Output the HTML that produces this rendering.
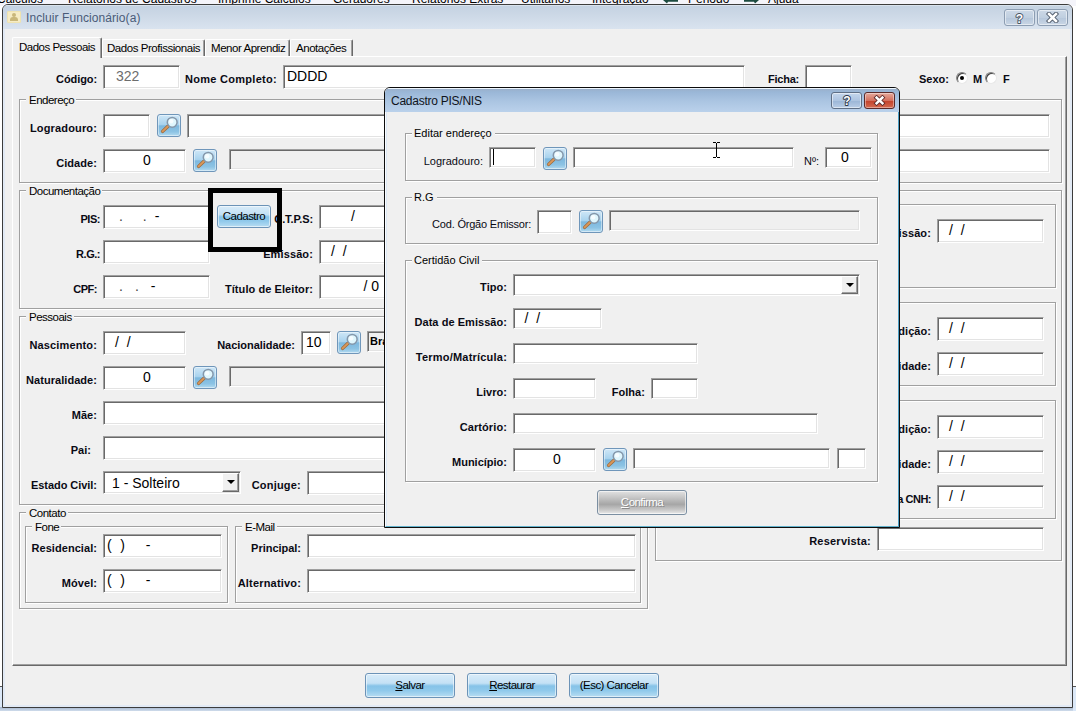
<!DOCTYPE html>
<html><head><meta charset="utf-8"><title>Incluir Funcionário(a)</title>
<style>
html,body{margin:0;padding:0;}
body{width:1076px;height:711px;overflow:hidden;background:#fff;position:relative;font-family:"Liberation Sans",sans-serif;font-size:11px;color:#000;}
div{box-sizing:border-box;}
.abs,.inp,.lbl,.grp,.gt,.sbtn,.btn{position:absolute;}
.inp{background:#fff;border:1px solid;border-color:#a0a0a0 #fff #fff #a0a0a0;box-shadow:inset 1px 1px 0 #696969, inset -1px -1px 0 #e3e3e3;font-size:14px;white-space:pre;overflow:hidden;color:#000;}
.inp span{position:absolute;top:2px;left:4px;line-height:17px;}
.inp.c span{left:5px;right:0;text-align:center;}
.inp.dis{background:#f0f0f0;}
.lbl{text-align:right;white-space:nowrap;line-height:16px;height:16px;font-size:11px;color:#0a0a14;}
.lbl.b{font-weight:bold;}
.lbl.r{font-weight:normal;}
.grp{border:1px solid #a0a0a0;box-shadow:1px 1px 0 #fff, inset 1px 1px 0 #fff;}
.gt{padding:0 2px 0 3px;line-height:14px;height:14px;font-size:11.5px;white-space:nowrap;color:#000;letter-spacing:-0.5px;}
.gt.ar{font-size:11px;letter-spacing:0;padding:0 3px 0 2px;margin-top:-1px;}
.sbtn{width:24px;height:23px;border:1px solid #6f96ba;border-radius:3px;background:linear-gradient(#cfe7f7 0%,#a9d3ee 45%,#7db8de 52%,#8cc3e4 80%,#b4dbf0 100%);box-shadow:inset 0 0 0 1px rgba(255,255,255,.45);}
.sbtn svg{position:absolute;left:-1px;top:-1px;}
.btn{border:1px solid #6c93b7;border-radius:3px;text-align:center;font-size:11.5px;letter-spacing:-0.55px;color:#000;background:linear-gradient(#d9ecf9 0%,#c4e1f5 40%,#86c3e8 52%,#90c9eb 72%,#b8ddf2 100%);box-shadow:inset 0 0 0 1px rgba(255,255,255,.55);}
.btn.gray{border-color:#7b8fa2;color:#fff;text-shadow:1px 1px 0 #8a8a8a;background:linear-gradient(#e2e2e2 0%,#c4c4c4 30%,#a6a6a6 58%,#c8c8c8 82%,#ececec 100%);}
u{text-decoration:underline;}
.combo-btn{position:absolute;right:1px;top:1px;bottom:1px;width:17px;background:#f0f0f0;border:1px solid;border-color:#fff #696969 #696969 #fff;box-shadow:inset -1px -1px 0 #a0a0a0;}
.combo-btn:after{content:"";position:absolute;left:4px;top:6px;border:4px solid transparent;border-top:4px solid #000;border-bottom:none;}
</style></head><body>

<div class="abs" style="left:0;top:0;width:1076px;height:6px;background:#f4f4fa;overflow:hidden;font-size:12px;white-space:nowrap;">
</div>
<div class="abs" style="left:0;top:0;width:1076px;height:5px;overflow:hidden;">
<div class="abs" style="left:-3px;top:-7.5px;font-size:12px;line-height:12px;white-space:nowrap;color:#000;">Cálculos</div>
<div class="abs" style="left:68px;top:-7.5px;font-size:12px;line-height:12px;white-space:nowrap;color:#000;">Relatórios de Cadastros</div>
<div class="abs" style="left:218px;top:-7.5px;font-size:12px;line-height:12px;white-space:nowrap;color:#000;">Imprime Cálculos</div>
<div class="abs" style="left:333px;top:-7.5px;font-size:12px;line-height:12px;white-space:nowrap;color:#000;">Geradores</div>
<div class="abs" style="left:412px;top:-7.5px;font-size:12px;line-height:12px;white-space:nowrap;color:#000;">Relatórios Extras</div>
<div class="abs" style="left:521px;top:-7.5px;font-size:12px;line-height:12px;white-space:nowrap;color:#000;">Utilitários</div>
<div class="abs" style="left:592px;top:-7.5px;font-size:12px;line-height:12px;white-space:nowrap;color:#000;">Integração</div>
<div class="abs" style="left:688px;top:-7.5px;font-size:12px;line-height:12px;white-space:nowrap;color:#000;">Periodo</div>
<div class="abs" style="left:768px;top:-7.5px;font-size:12px;line-height:12px;white-space:nowrap;color:#000;">Ajuda</div>
<svg style="position:absolute;left:662px;top:0;" width="17" height="5" viewBox="0 0 17 5"><path d="M1 0 L5 3.4 L6 1.8 L16 1.8 L16 0 Z" fill="#1d4b40"/></svg>
<svg style="position:absolute;left:743px;top:0;" width="17" height="5" viewBox="0 0 17 5"><path d="M16 0 L12 3.4 L11 1.8 L1 1.8 L1 0 Z" fill="#1d4b40"/></svg>
</div>
<div class="abs" style="left:0;top:686px;width:3px;height:25px;background:#dbe8f8;border-top:1px solid #555;"></div>
<div class="abs" style="left:0;top:707px;width:1076px;height:4px;background:linear-gradient(#a3b4cb,#cfdcec);"></div>
<div class="abs" style="left:1073px;top:686px;width:3px;height:25px;background:#dbe8f8;border-top:1px solid #555;"></div>
<div class="abs" id="win" style="left:2px;top:4px;width:1071px;height:704px;border:1px solid #3c3c3c;border-radius:6px 6px 0 0;background:#f0f0f0;overflow:hidden;">
<div class="abs" style="left:0;top:0;width:1069px;height:24px;background:linear-gradient(#eef3f9 0px,#c4d2e2 1px,#ccd8e6 40%,#d9e3ef 100%);"></div>
<div class="abs" style="left:0;top:24px;width:1069px;height:678px;border:2px solid #e2eaf5;border-top:none;border-left-width:2px;"></div>
</div>
<div class="abs" style="left:7px;top:11px;width:14px;height:12px;background:#f6ecc4;border:1px solid #efe3b0;border-radius:1px;"><div class="abs" style="left:4px;top:1px;width:4px;height:4px;border-radius:2px;background:#c9b77a;"></div><div class="abs" style="left:2px;top:5px;width:8px;height:4px;border-radius:3px 3px 0 0;background:#c9b77a;"></div></div>
<div class="abs" style="left:26px;top:9px;font-size:12px;line-height:18px;color:#4a5b78;letter-spacing:0.08px;white-space:nowrap;">Incluir Funcionário(a)</div>
<div class="abs" style="left:1004px;top:9px;width:31px;height:17px;border:1px solid #8c9db2;border-radius:3px;background:linear-gradient(#cdd9e7,#c0cfe0 50%,#b5c6da 51%,#c9d6e5);box-shadow:inset 0 0 0 1px rgba(255,255,255,.5);"></div>
<div class="abs" style="left:1037px;top:9px;width:31px;height:17px;border:1px solid #8c9db2;border-radius:3px;background:linear-gradient(#cdd9e7,#c0cfe0 50%,#b5c6da 51%,#c9d6e5);box-shadow:inset 0 0 0 1px rgba(255,255,255,.5);"></div>
<svg style="position:absolute;left:1004px;top:9px;" width="31" height="17" viewBox="0 0 31 17"><text x="15.5" y="13.5" text-anchor="middle" font-family="Liberation Sans, sans-serif" font-weight="bold" font-size="12" fill="#fff" stroke="#4a5565" stroke-width="1.8" paint-order="stroke" stroke-linejoin="round">?</text></svg>
<svg style="position:absolute;left:1046px;top:12px;" width="13" height="11" viewBox="0 0 13 11"><path d="M3 2 L10 9 M10 2 L3 9" stroke="#4a5565" stroke-width="4.4" stroke-linecap="square"/><path d="M3 2 L10 9 M10 2 L3 9" stroke="#fff" stroke-width="2.6" stroke-linecap="square"/></svg>
<div class="abs" style="left:12px;top:56px;width:1055px;height:610px;border:1px solid;border-color:#fff #696969 #696969 #fff;box-shadow:inset -1px -1px 0 #a0a0a0;"></div>
<div class="abs" style="left:12px;top:37px;width:90px;height:21px;background:#f0f0f0;border:1px solid;border-color:#fff #696969 #f0f0f0 #fff;border-bottom:none;border-radius:2px 2px 0 0;box-shadow:inset -1px 0 0 #a0a0a0;"></div>
<div class="abs" style="left:19px;top:40px;font-size:11.5px;line-height:14px;white-space:nowrap;letter-spacing:-0.5px;">Dados Pessoais</div>
<div class="abs" style="left:102px;top:39px;width:103px;height:17px;border:1px solid;border-color:#fff #696969 transparent #fff;border-bottom:none;border-radius:2px 2px 0 0;box-shadow:inset -1px 0 0 #a0a0a0;"></div>
<div class="abs" style="left:107px;top:41px;font-size:11.5px;line-height:14px;white-space:nowrap;letter-spacing:-0.45px;">Dados Profissionais</div>
<div class="abs" style="left:205px;top:39px;width:85px;height:17px;border:1px solid;border-color:#fff #696969 transparent #fff;border-bottom:none;border-radius:2px 2px 0 0;box-shadow:inset -1px 0 0 #a0a0a0;"></div>
<div class="abs" style="left:211px;top:41px;font-size:11.5px;line-height:14px;white-space:nowrap;letter-spacing:-0.45px;">Menor Aprendiz</div>
<div class="abs" style="left:290px;top:39px;width:63px;height:17px;border:1px solid;border-color:#fff #696969 transparent #fff;border-bottom:none;border-radius:2px 2px 0 0;box-shadow:inset -1px 0 0 #a0a0a0;"></div>
<div class="abs" style="left:296px;top:41px;font-size:11.5px;line-height:14px;white-space:nowrap;letter-spacing:-0.45px;">Anotações</div>
<div class="lbl b" style="left:-63px;top:71px;width:160px;letter-spacing:-0.09px;">Código:</div>
<div class="inp " style="left:103px;top:65px;width:77px;height:24px;"><span style="left:12px;color:#6d6d6d;">322</span></div>
<div class="lbl b" style="left:117px;top:71px;width:160px;letter-spacing:0.29px;">Nome Completo:</div>
<div class="inp " style="left:283px;top:65px;width:462px;height:24px;"><span style="left:3px;">DDDD</span></div>
<div class="lbl b" style="left:639px;top:71px;width:160px;letter-spacing:-0.23px;">Ficha:</div>
<div class="inp " style="left:805px;top:65px;width:47px;height:24px;"></div>
<div class="lbl b" style="left:789px;top:71px;width:160px;letter-spacing:0.00px;">Sexo:</div>
<div class="abs" style="left:956px;top:72px;width:12px;height:12px;border-radius:6px;background:#fff;border:1px solid;border-color:#808080 #e8e8e8 #e8e8e8 #808080;box-shadow:inset 1px 1px 0 #404040;"><div class="abs" style="left:3px;top:3px;width:4px;height:4px;border-radius:2px;background:#000;"></div></div>
<div class="lbl b" style="left:973px;top:71px;text-align:left;">M</div>
<div class="abs" style="left:985px;top:72px;width:12px;height:12px;border-radius:6px;background:#fff;border:1px solid;border-color:#808080 #e8e8e8 #e8e8e8 #808080;box-shadow:inset 1px 1px 0 #404040;"></div>
<div class="lbl b" style="left:1003px;top:71px;text-align:left;">F</div>
<div class="grp" style="left:19px;top:99px;width:1043px;height:84px;"></div>
<div class="gt " style="left:26px;top:93px;background:#f0f0f0;">Endereço</div>
<div class="lbl b" style="left:-63px;top:120px;width:160px;letter-spacing:0.15px;">Logradouro:</div>
<div class="inp " style="left:103px;top:114px;width:47px;height:24px;"></div>
<div class="sbtn" style="left:157px;top:114px;"><svg width="24" height="23" viewBox="0 0 24 23"><line x1="11" y1="12.2" x2="5.6" y2="17.4" stroke="#9a6a3e" stroke-width="3.4" stroke-linecap="round"/><line x1="11" y1="12.2" x2="5.6" y2="17.4" stroke="#d9975a" stroke-width="2" stroke-linecap="round"/><circle cx="15.2" cy="8.3" r="4.9" fill="#dff6fd" stroke="#8497ab" stroke-width="1.5"/><circle cx="14.2" cy="7.3" r="2.2" fill="#ffffff" opacity="0.7"/></svg></div>
<div class="inp " style="left:187px;top:114px;width:863px;height:24px;"></div>
<div class="lbl b" style="left:-63px;top:155px;width:160px;letter-spacing:0.07px;">Cidade:</div>
<div class="inp c" style="left:103px;top:149px;width:83px;height:24px;"><span style="">0</span></div>
<div class="sbtn" style="left:193px;top:149px;"><svg width="24" height="23" viewBox="0 0 24 23"><line x1="11" y1="12.2" x2="5.6" y2="17.4" stroke="#9a6a3e" stroke-width="3.4" stroke-linecap="round"/><line x1="11" y1="12.2" x2="5.6" y2="17.4" stroke="#d9975a" stroke-width="2" stroke-linecap="round"/><circle cx="15.2" cy="8.3" r="4.9" fill="#dff6fd" stroke="#8497ab" stroke-width="1.5"/><circle cx="14.2" cy="7.3" r="2.2" fill="#ffffff" opacity="0.7"/></svg></div>
<div class="inp dis" style="left:229px;top:149px;width:331px;height:21px;"></div>
<div class="inp " style="left:600px;top:149px;width:450px;height:24px;"></div>
<div class="grp" style="left:19px;top:190px;width:629px;height:119px;"></div>
<div class="gt " style="left:26px;top:184px;background:#f0f0f0;">Documentação</div>
<div class="lbl b" style="left:-60px;top:211px;width:160px;letter-spacing:-0.45px;">PIS:</div>
<div class="inp " style="left:103px;top:205px;width:107px;height:24px;"><span style="left:15px;color:#444;">.</span></div>
<div class="abs" style="left:142.8px;top:208px;font-size:14px;line-height:17px;color:#444;">.</div><div class="abs" style="left:154.7px;top:208px;font-size:14px;line-height:17px;">-</div>
<div class="btn " style="left:217px;top:205px;width:54px;height:23px;line-height:21px;">Cadastro</div>
<div class="lbl b" style="left:153px;top:211px;width:160px;letter-spacing:-0.11px;">C.T.P.S:</div>
<div class="inp " style="left:319px;top:205px;width:141px;height:24px;"><span style="left:31px;">/</span></div>
<div class="lbl b" style="left:-60px;top:246px;width:160px;letter-spacing:-0.48px;">R.G.:</div>
<div class="inp " style="left:103px;top:240px;width:107px;height:24px;"></div>
<div class="lbl b" style="left:153px;top:246px;width:160px;letter-spacing:0.12px;">Emissão:</div>
<div class="inp " style="left:319px;top:240px;width:141px;height:24px;"><span style="left:11px;">/  /</span></div>
<div class="lbl b" style="left:-63px;top:281px;width:160px;letter-spacing:-0.47px;">CPF:</div>
<div class="inp " style="left:103px;top:275px;width:107px;height:24px;"><span style="left:15px;color:#444;">.</span></div>
<div class="abs" style="left:135px;top:278px;font-size:14px;line-height:17px;color:#444;">.</div><div class="abs" style="left:150.8px;top:278px;font-size:14px;line-height:17px;">-</div>
<div class="lbl b" style="left:153px;top:281px;width:160px;letter-spacing:0.07px;">Título de Eleitor:</div>
<div class="inp " style="left:319px;top:275px;width:141px;height:24px;"><span style="left:43.5px;">/ 0</span></div>
<div class="abs" style="left:208px;top:188px;width:74px;height:64px;border:5px solid #000;"></div>
<div class="grp" style="left:19px;top:316px;width:629px;height:189px;"></div>
<div class="gt " style="left:26px;top:310px;background:#f0f0f0;">Pessoais</div>
<div class="lbl b" style="left:-63px;top:337px;width:160px;letter-spacing:0.13px;">Nascimento:</div>
<div class="inp " style="left:103px;top:331px;width:83px;height:24px;"><span style="left:11px;">/  /</span></div>
<div class="lbl b" style="left:135px;top:337px;width:160px;letter-spacing:-0.03px;">Nacionalidade:</div>
<div class="inp " style="left:301px;top:331px;width:30px;height:24px;"><span style="left:4px;">10</span></div>
<div class="sbtn" style="left:337px;top:331px;"><svg width="24" height="23" viewBox="0 0 24 23"><line x1="11" y1="12.2" x2="5.6" y2="17.4" stroke="#9a6a3e" stroke-width="3.4" stroke-linecap="round"/><line x1="11" y1="12.2" x2="5.6" y2="17.4" stroke="#d9975a" stroke-width="2" stroke-linecap="round"/><circle cx="15.2" cy="8.3" r="4.9" fill="#dff6fd" stroke="#8497ab" stroke-width="1.5"/><circle cx="14.2" cy="7.3" r="2.2" fill="#ffffff" opacity="0.7"/></svg></div>
<div class="inp dis" style="left:367px;top:331px;width:120px;height:21px;"><span style="left:2px;top:0.5px;font-size:11px;font-weight:bold;">Brasileira</span></div>
<div class="lbl b" style="left:-63px;top:372px;width:160px;letter-spacing:0.05px;">Naturalidade:</div>
<div class="inp c" style="left:103px;top:366px;width:83px;height:24px;"><span style="">0</span></div>
<div class="sbtn" style="left:193px;top:366px;"><svg width="24" height="23" viewBox="0 0 24 23"><line x1="11" y1="12.2" x2="5.6" y2="17.4" stroke="#9a6a3e" stroke-width="3.4" stroke-linecap="round"/><line x1="11" y1="12.2" x2="5.6" y2="17.4" stroke="#d9975a" stroke-width="2" stroke-linecap="round"/><circle cx="15.2" cy="8.3" r="4.9" fill="#dff6fd" stroke="#8497ab" stroke-width="1.5"/><circle cx="14.2" cy="7.3" r="2.2" fill="#ffffff" opacity="0.7"/></svg></div>
<div class="inp dis" style="left:229px;top:366px;width:300px;height:21px;"></div>
<div class="lbl b" style="left:-63px;top:407px;width:160px;letter-spacing:0.05px;">Mãe:</div>
<div class="inp " style="left:103px;top:401px;width:400px;height:24px;"></div>
<div class="lbl b" style="left:-69px;top:442px;width:160px;letter-spacing:0.05px;">Pai:</div>
<div class="inp " style="left:103px;top:436px;width:400px;height:24px;"></div>
<div class="lbl b" style="left:-63px;top:477px;width:160px;letter-spacing:-0.04px;">Estado Civil:</div>
<div class="inp" style="left:103px;top:471px;width:138px;height:23px;"><span style="left:8px;top:2.5px;">1 - Solteiro</span><div class="combo-btn"></div></div>
<div class="lbl b" style="left:141px;top:477px;width:160px;letter-spacing:0.21px;">Conjuge:</div>
<div class="inp " style="left:307px;top:471px;width:201px;height:24px;"></div>
<div class="grp" style="left:19px;top:512px;width:629px;height:97px;"></div>
<div class="gt " style="left:26px;top:506px;background:#f0f0f0;">Contato</div>
<div class="grp" style="left:25px;top:526px;width:203px;height:77px;"></div>
<div class="gt " style="left:32px;top:520px;background:#f0f0f0;">Fone</div>
<div class="grp" style="left:235px;top:526px;width:406px;height:77px;"></div>
<div class="gt " style="left:242px;top:520px;background:#f0f0f0;">E-Mail</div>
<div class="lbl b" style="left:-63px;top:540px;width:160px;letter-spacing:0.06px;">Residencial:</div>
<div class="inp " style="left:103px;top:534px;width:119px;height:24px;"><span style="left:3px;letter-spacing:0.25px;">(  )     -</span></div>
<div class="lbl b" style="left:-63px;top:575px;width:160px;letter-spacing:0.05px;">Móvel:</div>
<div class="inp " style="left:103px;top:569px;width:119px;height:24px;"><span style="left:3px;letter-spacing:0.25px;">(  )     -</span></div>
<div class="lbl b" style="left:141px;top:540px;width:160px;letter-spacing:-0.02px;">Principal:</div>
<div class="inp " style="left:307px;top:534px;width:329px;height:24px;"></div>
<div class="lbl b" style="left:141px;top:575px;width:160px;letter-spacing:0.18px;">Alternativo:</div>
<div class="inp " style="left:307px;top:569px;width:329px;height:24px;"></div>
<div class="grp" style="left:655px;top:190px;width:407px;height:371px;"></div>
<div class="grp" style="left:661px;top:204px;width:395px;height:84px;"></div>
<div class="grp" style="left:661px;top:302px;width:395px;height:84px;"></div>
<div class="grp" style="left:661px;top:400px;width:395px;height:119px;"></div>
<div class="lbl b" style="left:771px;top:225px;width:160px;letter-spacing:0.12px;">Emissão:</div>
<div class="inp " style="left:937px;top:219px;width:107px;height:24px;"><span style="left:11px;">/  /</span></div>
<div class="lbl b" style="left:771px;top:323px;width:160px;letter-spacing:0.05px;">Expedição:</div>
<div class="inp " style="left:937px;top:317px;width:107px;height:24px;"><span style="left:11px;">/  /</span></div>
<div class="lbl b" style="left:771px;top:358px;width:160px;letter-spacing:0.05px;">Validade:</div>
<div class="inp " style="left:937px;top:352px;width:107px;height:24px;"><span style="left:11px;">/  /</span></div>
<div class="lbl b" style="left:771px;top:421px;width:160px;letter-spacing:0.05px;">Expedição:</div>
<div class="inp " style="left:937px;top:415px;width:107px;height:24px;"><span style="left:11px;">/  /</span></div>
<div class="lbl b" style="left:771px;top:456px;width:160px;letter-spacing:0.05px;">Validade:</div>
<div class="inp " style="left:937px;top:450px;width:107px;height:24px;"><span style="left:11px;">/  /</span></div>
<div class="lbl b" style="left:771px;top:491px;width:160px;letter-spacing:-0.50px;">Primeira CNH:</div>
<div class="inp " style="left:937px;top:485px;width:107px;height:24px;"><span style="left:11px;">/  /</span></div>
<div class="lbl b" style="left:711px;top:533px;width:160px;letter-spacing:0.23px;">Reservista:</div>
<div class="inp " style="left:877px;top:527px;width:167px;height:24px;"></div>
<div class="btn " style="left:365px;top:673px;width:90px;height:25px;line-height:23px;"><u>S</u>alvar</div>
<div class="btn " style="left:467px;top:673px;width:90px;height:25px;line-height:23px;"><u>R</u>estaurar</div>
<div class="btn " style="left:569px;top:673px;width:90px;height:25px;line-height:23px;">(Esc) Cancelar</div>
<div class="abs" style="left:384px;top:87px;width:516px;height:441px;border:1px solid #0c0c0c;border-radius:6px 6px 0 0;background:#f0f0f0;overflow:hidden;">
<div class="abs" style="left:0;top:0;width:514px;height:439px;border-left:1px solid #fbfdff;box-shadow:inset 1px 0 0 #dce8f5;border-right:1px solid #4c9ec4;border-bottom:1px solid #62b2cc;"></div>
<div class="abs" style="left:0;top:0;width:514px;height:24px;background:linear-gradient(#eef6fd 0,#eef6fd 1px,#9bb0cb 1px,#9ab7d7 4px,#abc5e2 55%,#bad1eb 100%);"></div>
</div>
<div class="abs" style="left:391px;top:92px;font-size:12px;line-height:18px;color:#10141c;white-space:nowrap;letter-spacing:-0.25px;">Cadastro PIS/NIS</div>
<div class="abs" style="left:831px;top:92px;width:31px;height:17px;border:1px solid #5f6f85;border-radius:3px;background:linear-gradient(#c4d6ec,#adc4e0 50%,#9ab5d6 51%,#b9cde6);box-shadow:inset 0 0 0 1px rgba(255,255,255,.5);"></div>
<svg style="position:absolute;left:831px;top:92px;" width="31" height="16" viewBox="0 0 31 16"><text x="16" y="13" text-anchor="middle" font-family="Liberation Sans, sans-serif" font-weight="bold" font-size="12" fill="#fff" stroke="#2e3a4c" stroke-width="1.8" paint-order="stroke" stroke-linejoin="round">?</text></svg>
<div class="abs" style="left:864px;top:92px;width:31px;height:17px;border:1px solid #5a2a2a;border-radius:3px;background:linear-gradient(#e5a99c,#d4705e 50%,#c2402a 51%,#d46a50);box-shadow:inset 0 0 0 1px rgba(255,255,255,.4);"></div>
<svg style="position:absolute;left:873px;top:95px;" width="13" height="11" viewBox="0 0 13 11"><path d="M3.6 2.6 L9.4 8.2 M9.4 2.6 L3.6 8.2" stroke="#5a2a2a" stroke-width="4.2" stroke-linecap="square"/><path d="M3.6 2.6 L9.4 8.2 M9.4 2.6 L3.6 8.2" stroke="#fff" stroke-width="2.5" stroke-linecap="square"/></svg>
<div class="grp" style="left:405px;top:133px;width:473px;height:48px;"></div>
<div class="gt ar" style="left:412px;top:127px;background:#f0f0f0;">Editar endereço</div>
<div class="lbl r" style="left:323px;top:153px;width:160px;">Logradouro:</div>
<div class="inp " style="left:489px;top:147px;width:47px;height:21px;"></div>
<div class="abs" style="left:493px;top:149px;width:1px;height:16px;background:#000;"></div>
<div class="sbtn" style="left:543px;top:147px;"><svg width="24" height="23" viewBox="0 0 24 23"><line x1="11" y1="12.2" x2="5.6" y2="17.4" stroke="#9a6a3e" stroke-width="3.4" stroke-linecap="round"/><line x1="11" y1="12.2" x2="5.6" y2="17.4" stroke="#d9975a" stroke-width="2" stroke-linecap="round"/><circle cx="15.2" cy="8.3" r="4.9" fill="#dff6fd" stroke="#8497ab" stroke-width="1.5"/><circle cx="14.2" cy="7.3" r="2.2" fill="#ffffff" opacity="0.7"/></svg></div>
<div class="inp " style="left:573px;top:147px;width:221px;height:21px;"></div>
<div class="lbl r" style="left:659px;top:153px;width:160px;">Nº:</div>
<div class="inp " style="left:825px;top:147px;width:47px;height:21px;"><span style="left:15px;top:1px;">0</span></div>
<div class="grp" style="left:405px;top:197px;width:473px;height:47px;"></div>
<div class="gt ar" style="left:412px;top:191px;background:#f0f0f0;">R.G</div>
<div class="lbl r" style="left:371px;top:216px;width:160px;letter-spacing:-0.20px;">Cod. Órgão Emissor:</div>
<div class="inp " style="left:537px;top:210px;width:35px;height:24px;"></div>
<div class="sbtn" style="left:579px;top:210px;"><svg width="24" height="23" viewBox="0 0 24 23"><line x1="11" y1="12.2" x2="5.6" y2="17.4" stroke="#9a6a3e" stroke-width="3.4" stroke-linecap="round"/><line x1="11" y1="12.2" x2="5.6" y2="17.4" stroke="#d9975a" stroke-width="2" stroke-linecap="round"/><circle cx="15.2" cy="8.3" r="4.9" fill="#dff6fd" stroke="#8497ab" stroke-width="1.5"/><circle cx="14.2" cy="7.3" r="2.2" fill="#ffffff" opacity="0.7"/></svg></div>
<div class="inp dis" style="left:609px;top:210px;width:251px;height:21px;"></div>
<div class="grp" style="left:405px;top:260px;width:473px;height:222px;"></div>
<div class="gt ar" style="left:412px;top:254px;background:#f0f0f0;">Certidão Civil</div>
<div class="lbl b" style="left:347px;top:279px;width:160px;letter-spacing:0.05px;">Tipo:</div>
<div class="inp" style="left:513px;top:274px;width:347px;height:22px;"><div class="combo-btn"></div></div>
<div class="lbl b" style="left:347px;top:314px;width:160px;letter-spacing:0.05px;">Data de Emissão:</div>
<div class="inp " style="left:513px;top:308px;width:89px;height:21px;"><span style="left:10.5px;top:1px;">/  /</span></div>
<div class="lbl b" style="left:347px;top:349px;width:160px;letter-spacing:0.21px;">Termo/Matrícula:</div>
<div class="inp " style="left:513px;top:343px;width:185px;height:21px;"></div>
<div class="lbl b" style="left:347px;top:384px;width:160px;letter-spacing:0.05px;">Livro:</div>
<div class="inp " style="left:513px;top:378px;width:83px;height:21px;"></div>
<div class="lbl b" style="left:485px;top:384px;width:160px;letter-spacing:0.05px;">Folha:</div>
<div class="inp " style="left:651px;top:378px;width:47px;height:21px;"></div>
<div class="lbl b" style="left:347px;top:419px;width:160px;letter-spacing:0.10px;">Cartório:</div>
<div class="inp " style="left:513px;top:413px;width:305px;height:21px;"></div>
<div class="lbl b" style="left:347px;top:454px;width:160px;letter-spacing:0.00px;">Município:</div>
<div class="inp c" style="left:513px;top:448px;width:83px;height:24px;"><span style="">0</span></div>
<div class="sbtn" style="left:603px;top:448px;"><svg width="24" height="23" viewBox="0 0 24 23"><line x1="11" y1="12.2" x2="5.6" y2="17.4" stroke="#9a6a3e" stroke-width="3.4" stroke-linecap="round"/><line x1="11" y1="12.2" x2="5.6" y2="17.4" stroke="#d9975a" stroke-width="2" stroke-linecap="round"/><circle cx="15.2" cy="8.3" r="4.9" fill="#dff6fd" stroke="#8497ab" stroke-width="1.5"/><circle cx="14.2" cy="7.3" r="2.2" fill="#ffffff" opacity="0.7"/></svg></div>
<div class="inp " style="left:633px;top:448px;width:197px;height:21px;"></div>
<div class="inp " style="left:837px;top:448px;width:29px;height:21px;"></div>
<div class="btn gray" style="left:597px;top:490px;width:90px;height:25px;line-height:23px;"><u>C</u>onfirma</div>
<div class="abs" style="left:716px;top:143px;width:1px;height:14px;background:#000;"></div>
<div class="abs" style="left:713px;top:142px;width:3px;height:1px;background:#000;"></div><div class="abs" style="left:717px;top:142px;width:3px;height:1px;background:#000;"></div>
<div class="abs" style="left:713px;top:157px;width:3px;height:1px;background:#000;"></div><div class="abs" style="left:717px;top:157px;width:3px;height:1px;background:#000;"></div>
</body></html>
